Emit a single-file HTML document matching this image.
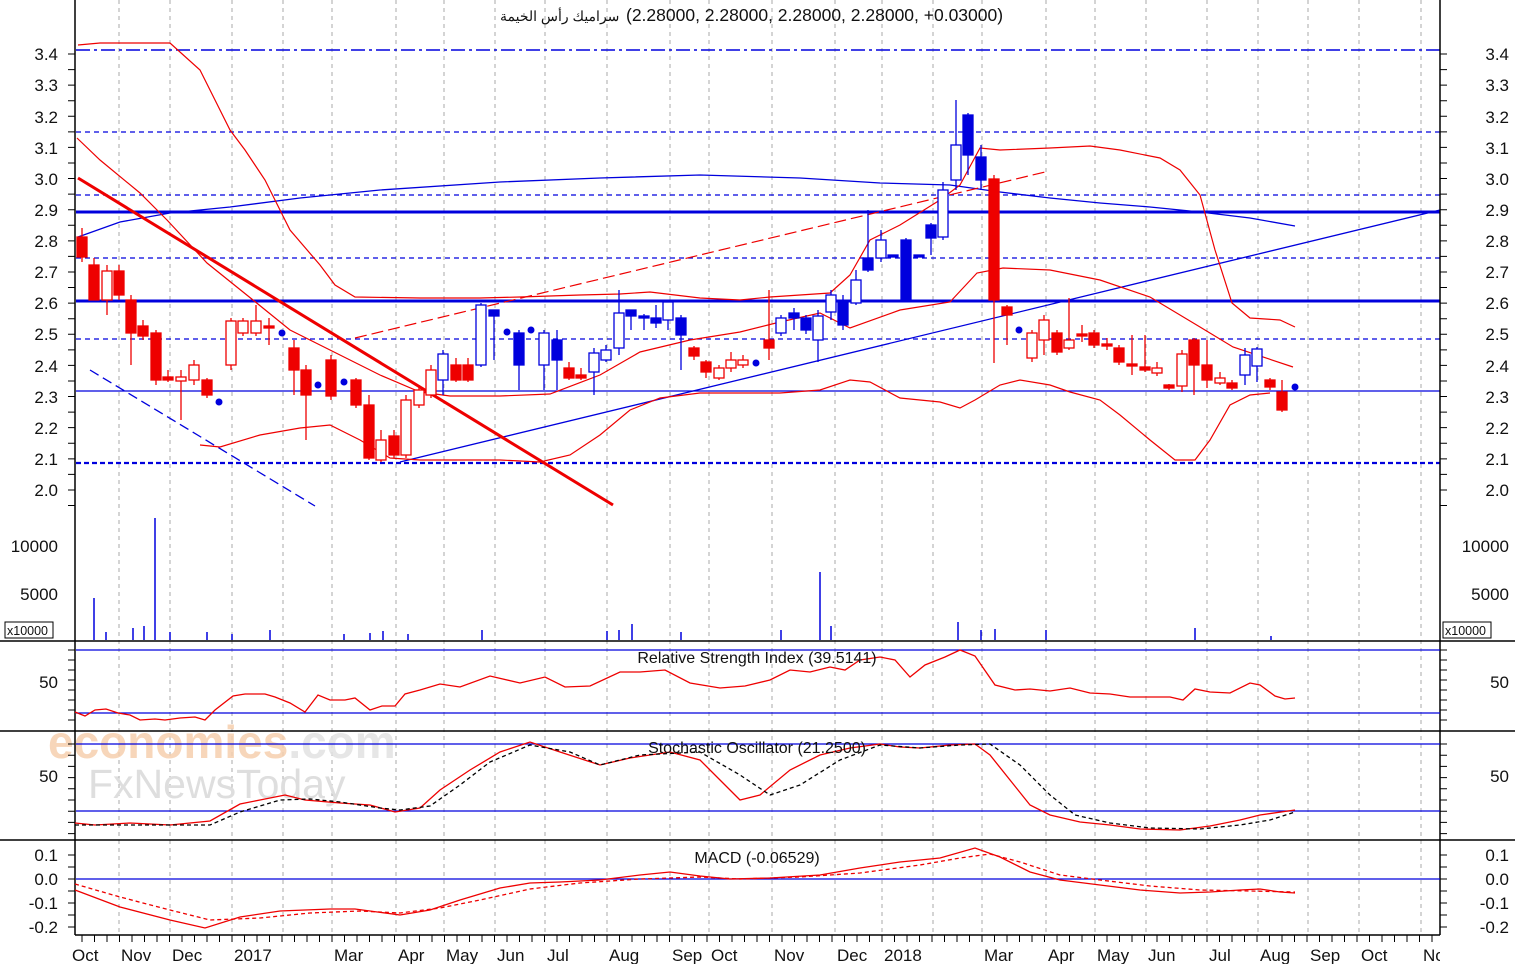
<!DOCTYPE html>
<html><head><meta charset="utf-8"><style>
html,body{margin:0;padding:0;background:#fff;}
svg{display:block;font-family:"Liberation Sans",Arial,sans-serif;}
</style></head><body>
<svg id="s" width="1515" height="964" viewBox="0 0 1515 964" xmlns="http://www.w3.org/2000/svg">
<rect width="1515" height="964" fill="#fff"/>
<g stroke="#aaa" stroke-width="1" stroke-dasharray="4,4">
<path d="M119 0V935M170 0V935M232 0V935M283 0V935M332 0V935M396 0V935M444 0V935M495 0V935M545 0V935M607 0V935M670 0V935M709 0V935M772 0V935M835 0V935M882 0V935M933 0V935M982 0V935M1046 0V935M1095 0V935M1146 0V935M1207 0V935M1258 0V935M1308 0V935M1359 0V935M1421 0V935"/>
</g>
<text x="48" y="758" font-size="46" fill="#f6cfae" font-weight="bold" opacity="0.85">economies<tspan fill="#e2e2e2">.com</tspan></text>
<text x="88" y="798" font-size="41" fill="#dedede">FxNewsToday</text>
<g stroke="#0000dd" fill="none">
<path d="M76 50H1440" stroke-width="1.5" stroke-dasharray="14,4,3,4"/>
<path d="M76 132H1440" stroke-dasharray="5,4" stroke-width="1.3"/>
<path d="M76 195H1440" stroke-dasharray="5,4" stroke-width="1.3"/>
<path d="M76 212H1440" stroke-width="3"/>
<path d="M76 258H1440" stroke-dasharray="5,4" stroke-width="1.3"/>
<path d="M76 301H1440" stroke-width="3"/>
<path d="M76 339H1440" stroke-dasharray="5,4" stroke-width="1.3"/>
<path d="M76 391H1440" stroke-width="1.3"/>
<path d="M76 463H1440" stroke-dasharray="5,3" stroke-width="2.2"/>
<path d="M400 462L1440 210" stroke-width="1.3"/>
<path d="M90 370L315 506" stroke-width="1.3" stroke-dasharray="10,5"/>
<polyline stroke-width="1.3" points="78,237 120,222 170,213 230,207 300,198 380,190 500,182 600,178 700,175 800,178 880,183 950,185 1000,192 1050,198 1100,203 1150,207 1200,212 1250,218 1295,226"/>
</g>
<g stroke="#ee0000" fill="none" stroke-width="1.2">
<polyline points="78,45 100,43 170,43 200,70 230,130 245,150 265,180 290,230 320,265 335,285 355,297 420,298 480,298 520,297 580,295 620,294 650,292 700,298 740,300 770,297 830,293 850,275 870,240 900,225 940,200 960,185 980,148 1000,150 1050,148 1090,146 1120,150 1160,158 1180,170 1200,195 1215,250 1232,303 1250,318 1280,320 1295,327"/>
<polyline points="77,138 100,160 140,193 167,220 207,263 253,300 290,330 340,355 380,375 420,392 450,396 500,396 550,394 600,375 640,352 690,340 740,332 780,322 820,313 850,328 900,310 950,302 977,273 1003,268 1050,270 1100,280 1150,297 1200,327 1233,347 1293,367"/>
<polyline points="200,445 220,447 260,435 300,428 330,425 360,440 390,458 420,460 500,460 540,462 570,455 600,435 630,410 660,398 700,393 740,393 780,393 820,390 850,380 870,382 900,398 940,402 960,408 975,400 1000,385 1020,380 1050,385 1070,392 1100,400 1120,415 1150,440 1175,460 1195,460 1210,440 1230,405 1250,395 1270,393"/>
<path d="M78 178L613 505" stroke-width="3"/>
<path d="M355 338L1045 172" stroke-dasharray="12,5"/>
</g>
<g id="candles"></g>
<g stroke="#0000dd" stroke-width="1.5">
<path d="M94 640V598M106 640V632M133 640V628M144 640V626M155 640V518M170 640V632M207 640V632M232 640V634M270 640V630M344 640V634M370 640V633M383 640V631M408 640V634M482 640V630M607 640V631M619 640V630M632 640V624M681 640V632M781 640V630M820 640V572M831 640V626M958 640V622M981 640V630M995 640V629M1046 640V630M1195 640V628M1271 640V636"/>
</g>
<g stroke="#000" stroke-width="1.5" fill="none">
<path d="M0 641H1515M0 731H1515M0 840H1515"/>
<path d="M75 0V935M1440 0V935M75 935H1440"/>
</g>
<g stroke="#0000dd" stroke-width="1.3">
<path d="M76 650H1440M76 713H1440M76 744H1440M76 811H1440M76 879H1440"/>
</g>
<g fill="none" stroke="#ee0000" stroke-width="1.3">
<polyline points="75,712 85,716 95,710 106,709 118,713 130,715 140,720 155,719 165,720 180,718 195,717 205,720 215,710 233,696 245,694 265,694 275,697 290,703 305,712 318,695 330,700 345,700 355,698 370,710 382,706 395,706 405,694 420,690 440,684 460,687 490,676 520,683 545,677 565,687 590,686 620,672 640,672 665,670 690,683 720,688 745,686 770,680 790,670 810,672 830,667 845,670 860,660 880,657 895,660 910,677 925,665 945,657 960,650 975,656 995,685 1015,690 1030,689 1050,691 1070,688 1090,693 1110,694 1130,697 1170,697 1183,700 1195,689 1210,692 1230,693 1250,683 1260,685 1275,696 1285,699 1295,698"/>
<polyline points="75,823 95,825 130,823 170,825 210,821 240,804 260,800 285,795 305,800 340,803 370,805 395,812 420,808 440,790 470,770 500,752 530,742 560,752 600,765 630,758 670,752 700,760 720,780 740,800 760,795 790,770 820,755 850,748 880,744 900,747 920,748 950,745 975,744 990,755 1010,780 1030,805 1050,815 1080,822 1110,825 1140,829 1180,830 1210,826 1240,820 1260,815 1295,810"/>
<polyline points="75,890 120,907 170,920 205,928 240,917 280,911 330,909 355,909 400,915 430,910 460,900 500,888 530,883 560,882 600,880 640,875 670,872 700,876 730,879 770,878 820,875 860,868 900,862 940,858 975,848 1000,857 1030,872 1060,880 1100,885 1140,890 1180,893 1210,892 1240,890 1260,889 1280,892 1295,893"/>
<polyline stroke-dasharray="4,3" points="75,884 120,897 170,910 210,920 260,918 310,913 360,911 400,913 440,908 480,900 530,889 580,883 640,879 700,877 740,879 800,877 860,873 920,865 960,858 990,854 1020,862 1060,875 1100,880 1150,886 1200,890 1250,891 1295,892"/>
</g>
<polyline fill="none" stroke="#000" stroke-width="1.3" stroke-dasharray="4,3" points="75,825 210,825 240,812 280,800 310,799 340,802 380,808 400,810 430,806 460,785 490,762 530,745 570,752 600,765 640,755 700,752 740,775 770,795 800,785 840,760 880,745 920,748 960,745 990,744 1020,765 1050,795 1075,815 1110,823 1150,828 1200,829 1240,825 1270,820 1295,812"/>
<g stroke="#000" stroke-width="1" id="ticks"></g>
<g font-size="17" fill="#111" text-anchor="end">
<text x="58" y="60">3.4</text><text x="58" y="91">3.3</text><text x="58" y="123">3.2</text><text x="58" y="154">3.1</text><text x="58" y="185">3.0</text><text x="58" y="216">2.9</text><text x="58" y="247">2.8</text><text x="58" y="278">2.7</text><text x="58" y="309">2.6</text><text x="58" y="340">2.5</text><text x="58" y="372">2.4</text><text x="58" y="403">2.3</text><text x="58" y="434">2.2</text><text x="58" y="465">2.1</text><text x="58" y="496">2.0</text>
<text x="58" y="552">10000</text><text x="58" y="600">5000</text>
<text x="58" y="688">50</text><text x="58" y="782">50</text>
<text x="58" y="861">0.1</text><text x="58" y="885">0.0</text><text x="58" y="909">-0.1</text><text x="58" y="933">-0.2</text>
</g>
<g font-size="17" fill="#111" text-anchor="end">
<text x="1509" y="60">3.4</text><text x="1509" y="91">3.3</text><text x="1509" y="123">3.2</text><text x="1509" y="154">3.1</text><text x="1509" y="185">3.0</text><text x="1509" y="216">2.9</text><text x="1509" y="247">2.8</text><text x="1509" y="278">2.7</text><text x="1509" y="309">2.6</text><text x="1509" y="340">2.5</text><text x="1509" y="372">2.4</text><text x="1509" y="403">2.3</text><text x="1509" y="434">2.2</text><text x="1509" y="465">2.1</text><text x="1509" y="496">2.0</text>
<text x="1509" y="552">10000</text><text x="1509" y="600">5000</text>
<text x="1509" y="688">50</text><text x="1509" y="782">50</text>
<text x="1509" y="861">0.1</text><text x="1509" y="885">0.0</text><text x="1509" y="909">-0.1</text><text x="1509" y="933">-0.2</text>
</g>
<rect x="5" y="622" width="48" height="16" fill="#fff" stroke="#000"/>
<text x="7" y="635" font-size="12.5" fill="#111">x10000</text>
<rect x="1443" y="622" width="48" height="16" fill="#fff" stroke="#000"/>
<text x="1445" y="635" font-size="12.5" fill="#111">x10000</text>
<g font-size="17" fill="#111">
<text x="72" y="961">Oct</text><text x="121" y="961">Nov</text><text x="172" y="961">Dec</text><text x="234" y="961">2017</text><text x="334" y="961">Mar</text><text x="398" y="961">Apr</text><text x="446" y="961">May</text><text x="497" y="961">Jun</text><text x="547" y="961">Jul</text><text x="609" y="961">Aug</text><text x="672" y="961">Sep</text><text x="711" y="961">Oct</text><text x="774" y="961">Nov</text><text x="837" y="961">Dec</text><text x="884" y="961">2018</text><text x="984" y="961">Mar</text><text x="1048" y="961">Apr</text><text x="1097" y="961">May</text><text x="1148" y="961">Jun</text><text x="1209" y="961">Jul</text><text x="1260" y="961">Aug</text><text x="1310" y="961">Sep</text><text x="1361" y="961">Oct</text><text x="1423" y="961">No</text>
</g>
<rect x="1440" y="940" width="75" height="24" fill="#fff"/>
<text x="500" y="21" font-size="14" fill="#111">سراميك رأس الخيمة</text>
<text x="626" y="21" font-size="17.5" fill="#111">(2.28000, 2.28000, 2.28000, 2.28000, +0.03000)</text>
<g font-size="16" fill="#111" text-anchor="middle">
<text x="757" y="663">Relative Strength Index (39.5141)</text>
<text x="757" y="753">Stochastic Oscillator (21.2500)</text>
<text x="757" y="863">MACD (-0.06529)</text>
</g>
</svg>
<script>
var C=[[82,237,257,228,262,'r'],[94,265,300,258,300,'r'],[107,271,300,265,315,'w'],[119,271,295,265,300,'r'],[131,300,333,295,365,'r'],[143,326,336,320,340,'r'],[156,333,380,330,385,'r'],[168,377,380,370,382,'r'],[181,377,381,370,420,'w'],[194,365,380,360,385,'w'],[207,380,395,378,398,'r'],[219,402,402,400,404,'d'],[231,321,365,318,370,'w'],[243,321,333,318,336,'w'],[256,321,333,305,336,'w'],[269,326,328,318,345,'r'],[282,333,333,330,335,'d'],[294,348,370,340,395,'r'],[306,370,395,365,440,'r'],[318,385,385,380,390,'d'],[331,360,396,355,400,'r'],[344,382,382,380,384,'d'],[356,380,405,378,408,'r'],[369,405,458,395,460,'r'],[381,440,460,430,462,'w'],[394,436,455,430,458,'r'],[406,400,455,395,458,'w'],[419,390,405,385,408,'w'],[431,370,395,365,398,'w'],[443,354,380,350,395,'o'],[456,365,380,358,382,'r'],[468,365,380,358,382,'r'],[481,305,365,303,367,'o'],[494,310,316,310,360,'b'],[507,332,332,330,334,'d'],[519,333,365,330,390,'b'],[531,330,330,328,332,'d'],[544,333,365,330,390,'o'],[557,340,360,330,390,'b'],[569,368,378,362,380,'r'],[581,375,378,368,380,'r'],[594,353,372,348,395,'o'],[606,350,360,345,362,'o'],[619,313,348,290,355,'o'],[631,310,316,310,330,'b'],[644,316,318,314,330,'b'],[656,318,323,305,328,'b'],[668,302,320,300,330,'o'],[681,318,335,315,370,'b'],[694,348,356,346,360,'r'],[706,362,372,360,378,'r'],[719,368,378,365,380,'w'],[731,360,368,352,372,'w'],[743,360,365,355,368,'w'],[756,363,363,361,365,'d'],[769,340,348,290,360,'r'],[781,318,333,315,336,'o'],[794,313,318,308,330,'b'],[806,318,330,315,334,'b'],[818,316,340,310,362,'o'],[831,295,312,290,320,'o'],[843,303,325,295,330,'b'],[856,280,303,270,305,'o'],[868,258,270,210,272,'b'],[881,240,258,230,262,'o'],[893,255,256,255,257,'b'],[906,240,300,238,300,'b'],[919,255,256,255,257,'b'],[931,225,238,223,255,'b'],[943,190,237,182,240,'o'],[956,145,180,100,190,'o'],[968,115,155,113,175,'b'],[981,157,180,145,190,'b'],[994,179,300,175,363,'r'],[1007,307,315,305,345,'r'],[1019,330,330,328,332,'d'],[1032,333,358,330,362,'w'],[1044,320,340,315,355,'w'],[1057,333,352,330,355,'r'],[1069,340,348,298,350,'w'],[1082,334,336,325,342,'r'],[1094,333,345,330,348,'r'],[1107,344,346,338,350,'r'],[1119,348,362,345,365,'r'],[1132,364,366,335,375,'r'],[1145,367,370,335,372,'r'],[1157,368,373,362,376,'w'],[1169,385,388,384,390,'r'],[1182,354,386,350,392,'w'],[1194,340,365,338,395,'r'],[1207,365,380,340,388,'r'],[1220,378,383,372,385,'w'],[1232,383,388,380,390,'r'],[1245,355,375,348,385,'o'],[1257,349,366,347,382,'o'],[1270,380,387,378,390,'r'],[1282,392,410,380,412,'r'],[1295,387,387,385,389,'d']];
var g=document.getElementById('candles'),h='';
C.forEach(function(c){var x=c[0],t=c[1],b=c[2],hi=c[3],lo=c[4],k=c[5];
if(k=='d'){h+='<circle cx="'+x+'" cy="'+t+'" r="3.5" fill="#0000dd"/>';return;}
var col=(k=='r'||k=='w')?'#ee0000':'#0000dd';var fill=(k=='r'||k=='b')?col:'#fff';
h+='<line x1="'+x+'" y1="'+hi+'" x2="'+x+'" y2="'+lo+'" stroke="'+col+'" stroke-width="1.3"/>';
var bh=Math.max(b-t,2);h+='<rect x="'+(x-5)+'" y="'+t+'" width="10" height="'+bh+'" fill="'+fill+'" stroke="'+col+'" stroke-width="1.3"/>';});
g.innerHTML=h;
var tk='',i;
for(i=0;i<30;i++){var y=54+i*15.57;if(y>632)break;tk+='M68 '+y+'H75M1440 '+y+'H1447';}
for(i=0;i<8;i++){var y=650+i*10;if(y>730)break;tk+='M68 '+y+'H75M1440 '+y+'H1447';}
for(i=0;i<9;i++){var y=744+i*11.2;if(y>838)break;tk+='M68 '+y+'H75M1440 '+y+'H1447';}
for(i=0;i<8;i++){var y=855+i*12;if(y>932)break;tk+='M68 '+y+'H75M1440 '+y+'H1447';}
for(i=0;i<110;i++){var x=82+i*12.5;if(x>1438)break;tk+='M'+x+' 935V942';}
document.getElementById('ticks').innerHTML='<path d="'+tk+'"/>';
</script>
</body></html>
